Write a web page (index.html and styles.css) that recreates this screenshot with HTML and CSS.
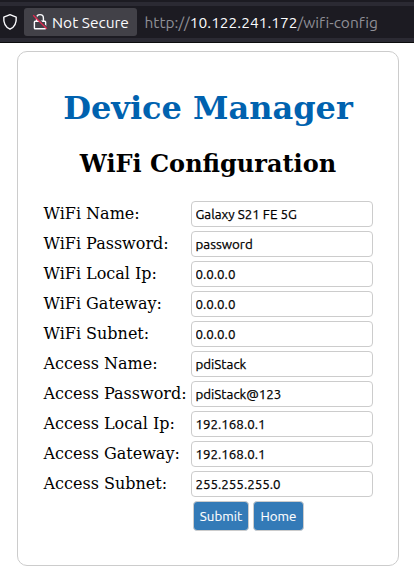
FILE: index.html
```html
<!DOCTYPE html>
<html lang="en">
<head>
<meta charset="utf-8">
<title>Device Manager</title>
<link rel="stylesheet" href="styles.css">
</head>
<body>
<header class="toolbar">
  <div class="urlbar">
    <svg class="shield" width="16" height="18" viewBox="0 0 16 18"><path d="M8 1.7 14.2 4.1C14.6 9 12.8 14 8 16.2 3.2 14 1.4 9 1.8 4.1Z" fill="none" stroke="#fbfbfe" stroke-width="1.4" stroke-linejoin="round"/></svg>
    <div class="chip">
      <svg class="lock" width="16" height="18" viewBox="0 0 16 18"><path d="M4.6 8V5A3.4 3.4 0 0 1 11.4 5V8M3.2 8.2H12.8Q13.6 8.2 13.6 9V15Q13.6 15.8 12.8 15.8H3.2Q2.4 15.8 2.4 15V9Q2.4 8.2 3.2 8.2Z" fill="none" stroke="#fbfbfe" stroke-width="1.4"/><path d="M2.2 1.8 15.2 14.8" stroke="#424148" stroke-width="1.4"/><path d="M1.2 2.2 14.8 15.8" stroke="#e22850" stroke-width="1.3"/></svg>
      <span class="status">Not Secure</span>
    </div>
    <div class="url"><span class="scheme">http://</span><span class="host">10.122.241.172</span><span class="path">/wifi-config</span></div>
  </div>
</header>
<main class="card">
  <h1>Device Manager</h1>
  <h2>WiFi Configuration</h2>
  <form class="form">
    <label for="f1">WiFi Name:</label><input id="f1" value="Galaxy S21 FE 5G">
    <label for="f2">WiFi Password:</label><input id="f2" value="password">
    <label for="f3">WiFi Local Ip:</label><input id="f3" value="0.0.0.0">
    <label for="f4">WiFi Gateway:</label><input id="f4" value="0.0.0.0">
    <label for="f5">WiFi Subnet:</label><input id="f5" value="0.0.0.0">
    <label for="f6">Access Name:</label><input id="f6" value="pdiStack">
    <label for="f7">Access Password:</label><input id="f7" value="pdiStack@123">
    <label for="f8">Access Local Ip:</label><input id="f8" value="192.168.0.1">
    <label for="f9">Access Gateway:</label><input id="f9" value="192.168.0.1">
    <label for="f10">Access Subnet:</label><input id="f10" value="255.255.255.0">
    <div class="actions"><button type="button" class="submit">Submit</button><button type="button" class="home">Home</button></div>
  </form>
</main>
</body>
</html>
```
FILE: styles.css
```css
* { box-sizing: border-box; }
body { margin: 0; background: #fff; font-family: "DejaVu Serif", serif; color: #000; }
.toolbar { height: 43px; padding-top: 2px; background: #1c1b22; border-bottom: 1px solid #0c0c0d; }
.urlbar { display: flex; align-items: center; height: 40px; border: solid #2b2a33; border-width: 4px 0; font-family: Ubuntu, "Noto Sans", sans-serif; font-size: 15.5px; white-space: nowrap; color: #fbfbfe; }
.shield { margin-left: 2px; flex: none; }
.chip { display: flex; align-items: center; width: 113px; height: 28px; margin-left: 6px; padding-left: 8px; background: #424148; border-radius: 3px; flex: none; }
.status { margin-left: 4px; }
.url { margin-left: 7.5px; font-variant-ligatures: none; }
.scheme, .path { color: #8f8f96; }
.card { width: 382px; height: 515px; margin: 8px 0 0 17px; padding: 0 25px; border: 1px solid #ccc; border-radius: 10px; }
h1 { margin: 37px 0 0; font-size: 32px; line-height: 38px; text-align: center; color: #0062af; }
h2 { margin: 23px 0 0; font-size: 24px; line-height: 28px; text-align: center; }
.form { display: grid; grid-template-columns: 148px 182px; grid-auto-rows: 26px; row-gap: 4px; margin-top: 23px; }
label { padding-left: 0.5px; font-size: 16px; line-height: 26px; white-space: nowrap; }
input { width: 182px; height: 26px; padding: 1px 4px 0 3.5px; border: 1px solid #ccc; border-radius: 4px; outline: 0; background: #fff; color: #000; font: 13.333px Ubuntu, "Noto Sans", sans-serif; -webkit-text-stroke: 0.25px #000; }
.actions { grid-column: 2; display: flex; gap: 4px; padding-left: 2px; }
button { height: 30px; padding: 0; border: 1px solid #ccc; border-radius: 4px; background: #337ab7; color: #fff; font: 13.333px Ubuntu, "Noto Sans", sans-serif; -webkit-text-stroke: 0.1px #fff; }
.submit { width: 56px; }
.home { width: 51px; }
```
